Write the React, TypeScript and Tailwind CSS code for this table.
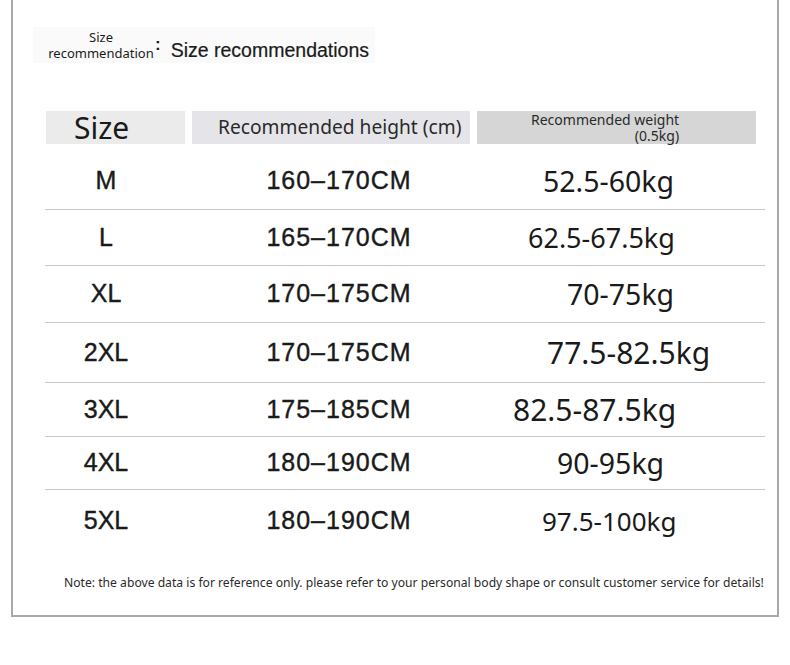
import React from "react";

const rows = [
  { size: "M", height: "160–170CM", weight: "52.5-60kg", rowCls: "h-[57px] border-b", wCls: "pl-[32px] text-[28.5px]" },
  { size: "L", height: "165–170CM", weight: "62.5-67.5kg", rowCls: "h-[56px] border-b", wCls: "pl-[17px] text-[27px]" },
  { size: "XL", height: "170–175CM", weight: "70-75kg", rowCls: "h-[57px] border-b", wCls: "pl-[56px] text-[28.5px]" },
  { size: "2XL", height: "170–175CM", weight: "77.5-82.5kg", rowCls: "h-[60px] border-b", wCls: "pl-[36px] text-[30px]" },
  { size: "3XL", height: "175–185CM", weight: "82.5-87.5kg", rowCls: "h-[54px] border-b", wCls: "pl-[2px] text-[30px]" },
  { size: "4XL", height: "180–190CM", weight: "90-95kg", rowCls: "h-[53px] border-b", wCls: "pl-[46px] text-[28.5px]" },
  { size: "5XL", height: "180–190CM", weight: "97.5-100kg", rowCls: "h-[62px]", wCls: "pl-[31px] text-[26px]" },
];

export default function App() {
  return (
    <div className="w-[790px] h-[665px] bg-white text-[#1a1a1a]">
      <div className="ml-[11px] w-[768px] h-[617px] border-x-2 border-b-2 border-[#a9a9a9] flex flex-col">
        {/* title */}
        <div className="h-[111px] pt-[27px]">
          <div className="ml-[20px] w-[342px] h-[36px] bg-[#fafafa] flex items-end">
            <div className="ml-[14px] w-[108px] text-center font-['Noto_Sans',sans-serif] text-[13px] leading-[16px] pb-[1px]">
              <div className="leading-[15px]">Size</div>
              <div className="leading-[17px]">recommendation</div>
            </div>
            <div className="font-['Liberation_Sans',sans-serif] font-bold text-[17px] leading-[17px] pb-[10px]">:</div>
            <div className="ml-[10px] font-['Liberation_Sans',sans-serif] text-[19.5px] leading-[22px] pb-[2px] [-webkit-text-stroke:0.2px_#1a1a1a]">
              Size recommendations
            </div>
          </div>
        </div>

        {/* header */}
        <div className="ml-[33px] flex gap-[7px] h-[33px] font-['Noto_Sans',sans-serif]">
          <div className="w-[139px] bg-[#ebebeb] flex items-center pl-[28px] text-[30px] leading-none">Size</div>
          <div className="w-[278px] bg-[#e5e5e9] flex items-center pl-[26px] pb-[2px] text-[19.2px] leading-none text-[#2a2a2a]">
            Recommended height (cm)
          </div>
          <div className="w-[279px] bg-[#d6d6d6] pl-[54px] text-[14px] text-[#2a2a2a] flex flex-col items-start">
            <div className="flex flex-col items-end">
              <div className="leading-[17px]">Recommended weight</div>
              <div className="leading-[16px]">(0.5kg)</div>
            </div>
          </div>
        </div>

        {/* rows */}
        <div className="ml-[32px] w-[720px] mt-[9px] flex flex-col">
          {rows.map((r) => (
            <div key={r.size} className={`flex items-center border-[#c9c9c9] ${r.rowCls}`}>
              <div className="w-[122px] text-center font-['Liberation_Sans',sans-serif] text-[25px] [-webkit-text-stroke:0.4px_#1a1a1a]">
                {r.size}
              </div>
              <div className="w-[344px] text-center font-['Liberation_Sans',sans-serif] text-[25px] tracking-[1px] [-webkit-text-stroke:0.4px_#1a1a1a]">
                {r.height}
              </div>
              <div className={`font-['Noto_Sans',sans-serif] leading-none ${r.wCls}`}>{r.weight}</div>
            </div>
          ))}
        </div>

        {/* note */}
        <div className="mt-[22px] ml-[51px] font-['Noto_Sans',sans-serif] text-[12.15px] text-[#2a2a2a] whitespace-nowrap">
          Note: the above data is for reference only. please refer to your personal body shape or consult customer service for details!
        </div>
      </div>
    </div>
  );
}
